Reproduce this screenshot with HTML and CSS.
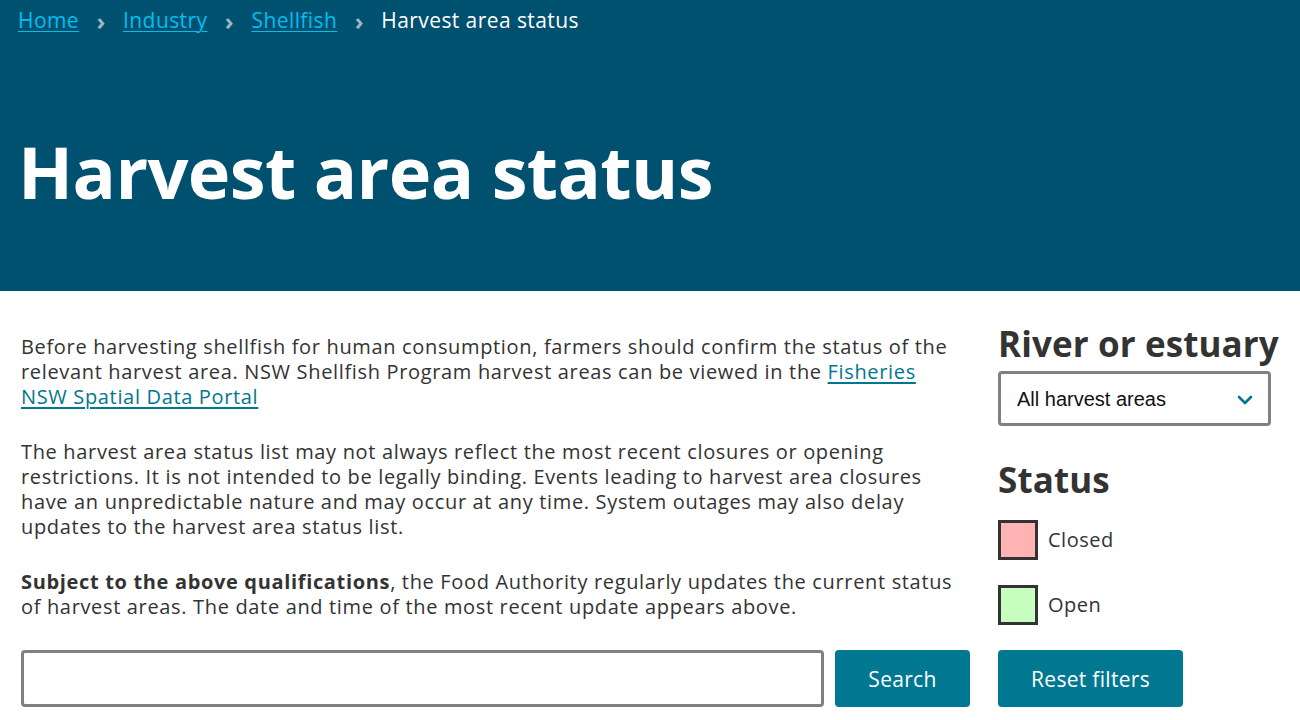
FILE: index.html
```html
<!DOCTYPE html>
<html lang="en">
<head>
<meta charset="utf-8">
<title>Harvest area status</title>
<link rel="stylesheet" href="styles.css">
</head>
<body>
<header class="hero">
  <nav class="crumbs">
    <a href="#">Home</a><span class="sep">›</span>
    <a href="#">Industry</a><span class="sep">›</span>
    <a href="#">Shellfish</a><span class="sep">›</span>
    <span class="current">Harvest area status</span>
  </nav>
  <h1 class="title">Harvest area status</h1>
</header>
<main class="page">
  <div class="intro">
    <p>Before harvesting shellfish for human consumption, farmers should confirm the status of the relevant harvest area. NSW Shellfish Program harvest areas can be viewed in the <a href="#">Fisheries NSW Spatial Data Portal</a></p>
    <p>The harvest area status list may not always reflect the most recent closures or opening restrictions. It is not intended to be legally binding. Events leading to harvest area closures have an unpredictable nature and may occur at any time. System outages may also delay updates to the harvest area status list.</p>
    <p><strong>Subject to the above qualifications</strong>, the Food Authority regularly updates the current status of harvest areas. The date and time of the most recent update appears above.</p>
  </div>
  <aside class="filters">
    <h2 class="ftitle">River or estuary</h2>
    <div class="select">
      <span>All harvest areas</span>
      <svg class="chev" width="16" height="10" viewBox="0 0 16 10"><path d="M2 2 L8 8 L14 2" fill="none" stroke="#00788f" stroke-width="2.6" stroke-linecap="round" stroke-linejoin="round"/></svg>
    </div>
    <h2 class="ftitle status">Status</h2>
    <div class="legend"><span class="swatch closed"></span><span>Closed</span></div>
    <div class="legend"><span class="swatch open"></span><span>Open</span></div>
  </aside>
  <form class="search">
    <input class="box" type="text" aria-label="Search">
    <button class="btn" type="button">Search</button>
  </form>
  <div class="reset">
    <button class="btn wide" type="button">Reset filters</button>
  </div>
</main>
</body>
</html>
```
FILE: styles.css
```css
* { box-sizing: border-box; }
body {
  margin: 0;
  font-family: "Open Sans", "DejaVu Sans", sans-serif;
  color: #333333;
  background: #ffffff;
}
.hero {
  background: #00506f;
  height: 291px;
  padding: 7px 18px 0;
}
.crumbs {
  font-size: 21px;
  line-height: 27px;
  letter-spacing: 0.42px;
  color: #ffffff;
  display: flex;
  align-items: center;
}
.crumbs a {
  color: #00bff0;
  text-decoration: underline;
  text-underline-offset: 3px;
  text-decoration-thickness: 1px;
}
.crumbs .sep {
  color: #9fb6c2;
  width: 44px;
  text-align: center;
  font-size: 24px;
  font-weight: 700;
  line-height: 27px;
}
.title {
  margin: 97px 0 0;
  font-size: 72px;
  line-height: 80px;
  font-weight: 700;
  color: #ffffff;
  letter-spacing: -0.6px;
}
.page {
  display: grid;
  grid-template-columns: 934px 282px;
  column-gap: 43px;
  row-gap: 25px;
  padding: 31px 20px 0 21px;
}
.intro { padding-top: 12px; }
.intro p {
  margin: 0 0 30px;
  font-size: 20px;
  line-height: 25px;
  letter-spacing: 0.66px;
}
.intro p:last-child { margin-bottom: 0; }
.intro a { color: #00778f; text-underline-offset: 3px; }
.ftitle {
  margin: 0;
  font-size: 35px;
  line-height: 43px;
  font-weight: 700;
  color: #333333;
  letter-spacing: 0.1px;
  white-space: nowrap;
}
.select {
  margin-top: 6px;
  width: 273px;
  height: 55px;
  border: 3px solid #808080;
  border-radius: 4px;
  display: flex;
  align-items: center;
  justify-content: space-between;
  padding: 2px 15px 0 16px;
  font-family: "Liberation Sans", Arial, sans-serif;
  font-size: 20px;
  color: #111111;
}
.status { margin-top: 32px; }
.legend {
  display: flex;
  align-items: center;
  gap: 10px;
  margin-top: 19px;
  font-size: 20px;
  letter-spacing: 0.5px;
  color: #333333;
}
.legend span:last-child { position: relative; top: -1px; }
.legend + .legend { margin-top: 25px; }
.swatch {
  width: 40px;
  height: 40px;
  border: 3px solid #333333;
  display: block;
}
.swatch.closed { background: #ffb3b3; }
.swatch.open { background: #c6ffc0; }
.search {
  display: flex;
  gap: 11px;
  margin: 0;
  width: 949px;
}
.box {
  flex: 0 0 803px;
  width: 803px;
  height: 57px;
  border: 3px solid #808080;
  border-radius: 4px;
  margin: 0;
  font-size: 18px;
}
.btn {
  flex: 0 0 auto;
  height: 57px;
  width: 135px;
  border: none;
  border-radius: 4px;
  background: #007891;
  color: #ffffff;
  font-family: "Open Sans", "DejaVu Sans", sans-serif;
  font-size: 21px;
  letter-spacing: 0.3px;
  padding: 0;
}
.btn.wide { width: 185px; }
```
